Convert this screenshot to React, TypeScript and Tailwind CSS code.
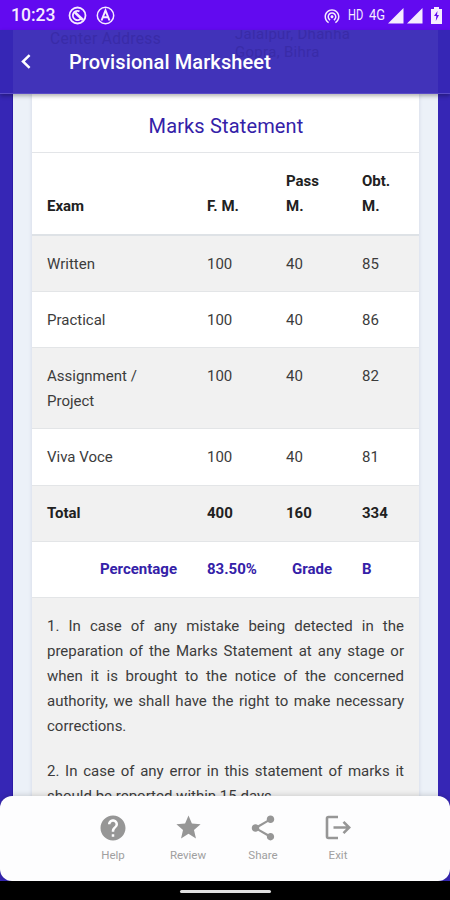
import { MdHelp, MdShare, MdStar, MdWifiTethering } from 'react-icons/md'

interface ExamRow {
  exam: string
  full: number
  pass: number
  obtained: number
}

const rows: ExamRow[] = [
  { exam: 'Written', full: 100, pass: 40, obtained: 85 },
  { exam: 'Practical', full: 100, pass: 40, obtained: 86 },
  { exam: 'Assignment / Project', full: 100, pass: 40, obtained: 82 },
  { exam: 'Viva Voce', full: 100, pass: 40, obtained: 81 }
]

const notes = [
  '1. In case of any mistake being detected in the preparation of the Marks Statement at any stage or when it is brought to the notice of the concerned authority, we shall have the right to make necessary corrections.',
  '2. In case of any error in this statement of marks it should be reported within 15 days.'
]

const ExitIcon = () => (
  <svg width="26" height="26" viewBox="0 0 26 26" fill="none" stroke="currentColor" strokeWidth="2.6">
    <path d="M13 2H3.5Q2 2 2 3.5V21.5Q2 23 3.5 23H13" />
    <path d="M8.5 12.5H24M18.5 6.8L24.2 12.5L18.5 18.2" />
  </svg>
)

const StatusBar = () => (
  <div className="flex h-[30px] shrink-0 items-center bg-[#620af0] pl-[11px] pr-[8px] pt-[1px] text-[#f6ebff]">
    <span className="w-[57px] text-[17.5px] font-medium leading-none">10:23</span>
    <svg className="mr-[9px]" width="19" height="19" viewBox="0 0 19 19" fill="none" stroke="currentColor">
      <circle cx="9.5" cy="9.5" r="8" strokeWidth="1.8" />
      <path d="M13.6 11.5A4.6 4.6 0 1 1 11.5 5.4" strokeWidth="1.8" />
      <path d="M7 6.5L15 14" strokeWidth="2.6" />
    </svg>
    <svg width="19" height="19" viewBox="0 0 19 19" fill="none" stroke="currentColor">
      <circle cx="9.5" cy="9.5" r="8.2" strokeWidth="1.5" />
      <path d="M5.5 14.5L9.5 4.5L13.5 14.5M7 11.3H12" strokeWidth="2" />
    </svg>
    <div className="ml-auto flex items-center">
      <MdWifiTethering className="mr-[7px] h-[18px] w-[18px]" />
      <span className="w-[21px] origin-left scale-x-[.74] text-[15px] leading-none">HD</span>
      <span className="w-[19px] origin-left scale-x-[.86] text-[15px] leading-none">4G</span>
      <svg width="35" height="16" viewBox="0 0 35 16" fill="currentColor">
        <path d="M0 15.5L15.5 0V15.5Z" />
        <path d="M19 15.5L34.5 0V15.5Z" />
      </svg>
      <svg className="ml-[8px]" width="11" height="17" viewBox="0 0 11 17" fill="currentColor">
        <path d="M3 0H8V2H11V17H0V2H3Z" />
        <path d="M6.5 4L3 9H5.3L4.8 14L8 8H6Z" fill="#620af0" />
      </svg>
    </div>
  </div>
)

const AppBar = () => (
  <header className="relative z-10 h-[64px] shrink-0 overflow-hidden border-b border-[#5a4bc6] bg-[#4133b9] px-[21px] shadow-[0_2px_4px_rgba(0,0,0,0.3)]">
    <div className="absolute inset-y-0 left-0 w-[13px] bg-[#3626b5]"></div>
    <div className="absolute inset-y-0 right-0 w-[12px] bg-[#3626b5]"></div>
    {/* page text showing through the translucent bar */}
    <div className="absolute left-[50px] top-[-2px] text-[15.6px] tracking-[0.3px] text-[#392ba8]">Center Address</div>
    <div className="absolute left-[235px] top-[-5px] w-[140px] text-[15px] leading-[18px] tracking-[0.3px] text-[#392ba8]">
      Jalalpur, Dhanha Gopra, Bihra
    </div>
    <div className="relative flex h-full items-center text-white">
      <svg width="10" height="15" viewBox="0 0 10 15" fill="none" stroke="currentColor" strokeWidth="2.5">
        <path d="M8.6 1.2L2 7.5L8.6 13.8" />
      </svg>
      <h1 className="ml-[38px] text-[20px] font-medium leading-none tracking-[0.1px]">Provisional Marksheet</h1>
    </div>
  </header>
)

const MarksTable = () => (
  <table className="w-full table-fixed border-collapse text-left align-top text-[15px] leading-[25px] text-[#3c3c3c]">
    <colgroup>
      <col className="w-[160px]" />
      <col className="w-[79px]" />
      <col className="w-[76px]" />
      <col />
    </colgroup>
    <thead>
      <tr className="h-[82px] border-b-2 border-[#dee2e6] align-bottom text-[#212121]">
        <th className="px-[15px] pb-[15px] font-bold">Exam</th>
        <th className="px-[15px] pb-[15px] font-bold">F. M.</th>
        <th className="px-[15px] pb-[15px] font-bold">Pass M.</th>
        <th className="px-[15px] pb-[15px] font-bold">Obt. M.</th>
      </tr>
    </thead>
    <tbody>
      {rows.map((row) => (
        <tr key={row.exam} className="h-[56.25px] border-b border-[#e3e5e7] align-top odd:bg-[#f1f1f1]">
          <td className="px-[15px] pb-[14px] pt-[16px]">{row.exam}</td>
          <td className="px-[15px] pb-[14px] pt-[16px]">{row.full}</td>
          <td className="px-[15px] pb-[14px] pt-[16px]">{row.pass}</td>
          <td className="px-[15px] pb-[14px] pt-[16px]">{row.obtained}</td>
        </tr>
      ))}
      <tr className="h-[56.25px] border-b border-[#e3e5e7] bg-[#f1f1f1] text-[#212121]">
        <th className="px-[15px]">Total</th>
        <th className="px-[15px]">400</th>
        <th className="px-[15px]">160</th>
        <th className="px-[15px]">334</th>
      </tr>
      <tr className="h-[56.25px] border-b border-[#e3e5e7] text-[#3421a8]">
        <th className="px-[15px] text-right">Percentage</th>
        <th className="px-[15px]">83.50%</th>
        <th className="px-[15px] text-right">Grade</th>
        <th className="px-[15px]">B</th>
      </tr>
      <tr className="bg-[#f1f1f1]">
        <td colSpan={4} className="px-[15px] py-[16px] text-justify">
          {notes.map((note) => (
            <p key={note} className="mb-[20px]">{note}</p>
          ))}
        </td>
      </tr>
    </tbody>
  </table>
)

const tabs = [
  { label: 'Help', icon: <MdHelp className="h-[30px] w-[30px]" /> },
  { label: 'Review', icon: <MdStar className="h-[29px] w-[29px]" /> },
  { label: 'Share', icon: <MdShare className="h-[30px] w-[30px]" /> },
  { label: 'Exit', icon: <ExitIcon /> }
]

const BottomBar = () => (
  <nav className="relative z-10 flex h-[85px] shrink-0 justify-center rounded-[12px] bg-[#fdfdfe] pl-[1px] pt-[16px] shadow-[0_0_6px_rgba(0,0,0,0.2)]">
    {tabs.map((tab) => (
      <div key={tab.label} className="flex w-[75px] flex-col items-center text-[#969696]">
        <div className="flex h-[31px] items-center">{tab.icon}</div>
        <span className="mt-[5px] text-[11.5px] leading-[14px] text-[#a0a0a0]">{tab.label}</span>
      </div>
    ))}
  </nav>
)

const App = () => {
  return (
    <div className="flex h-[900px] w-[450px] flex-col overflow-hidden bg-[#3626b5] font-[Roboto,sans-serif]">
      <StatusBar />
      <AppBar />
      <main className="mx-[12px] h-[702px] shrink-0 overflow-hidden border-l border-[#2c1ba6] bg-[#ecf1f8] pl-[19px] pr-[19px]">
        <div className="h-[900px] bg-white shadow-[0_0_4px_rgba(60,70,130,0.15)]">
          <h2 className="h-[59px] border-b border-[#e3e5e8] pl-[1px] pt-[18px] text-center text-[20px] leading-[28px] tracking-[0.15px] text-[#3421a8]">
            Marks Statement
          </h2>
          <MarksTable />
        </div>
      </main>
      <BottomBar />
      <div className="flex grow items-center justify-center bg-black pt-[1px]">
        <div className="h-[3px] w-[91px] rounded-full bg-[#dedede]"></div>
      </div>
    </div>
  )
}

export default App
